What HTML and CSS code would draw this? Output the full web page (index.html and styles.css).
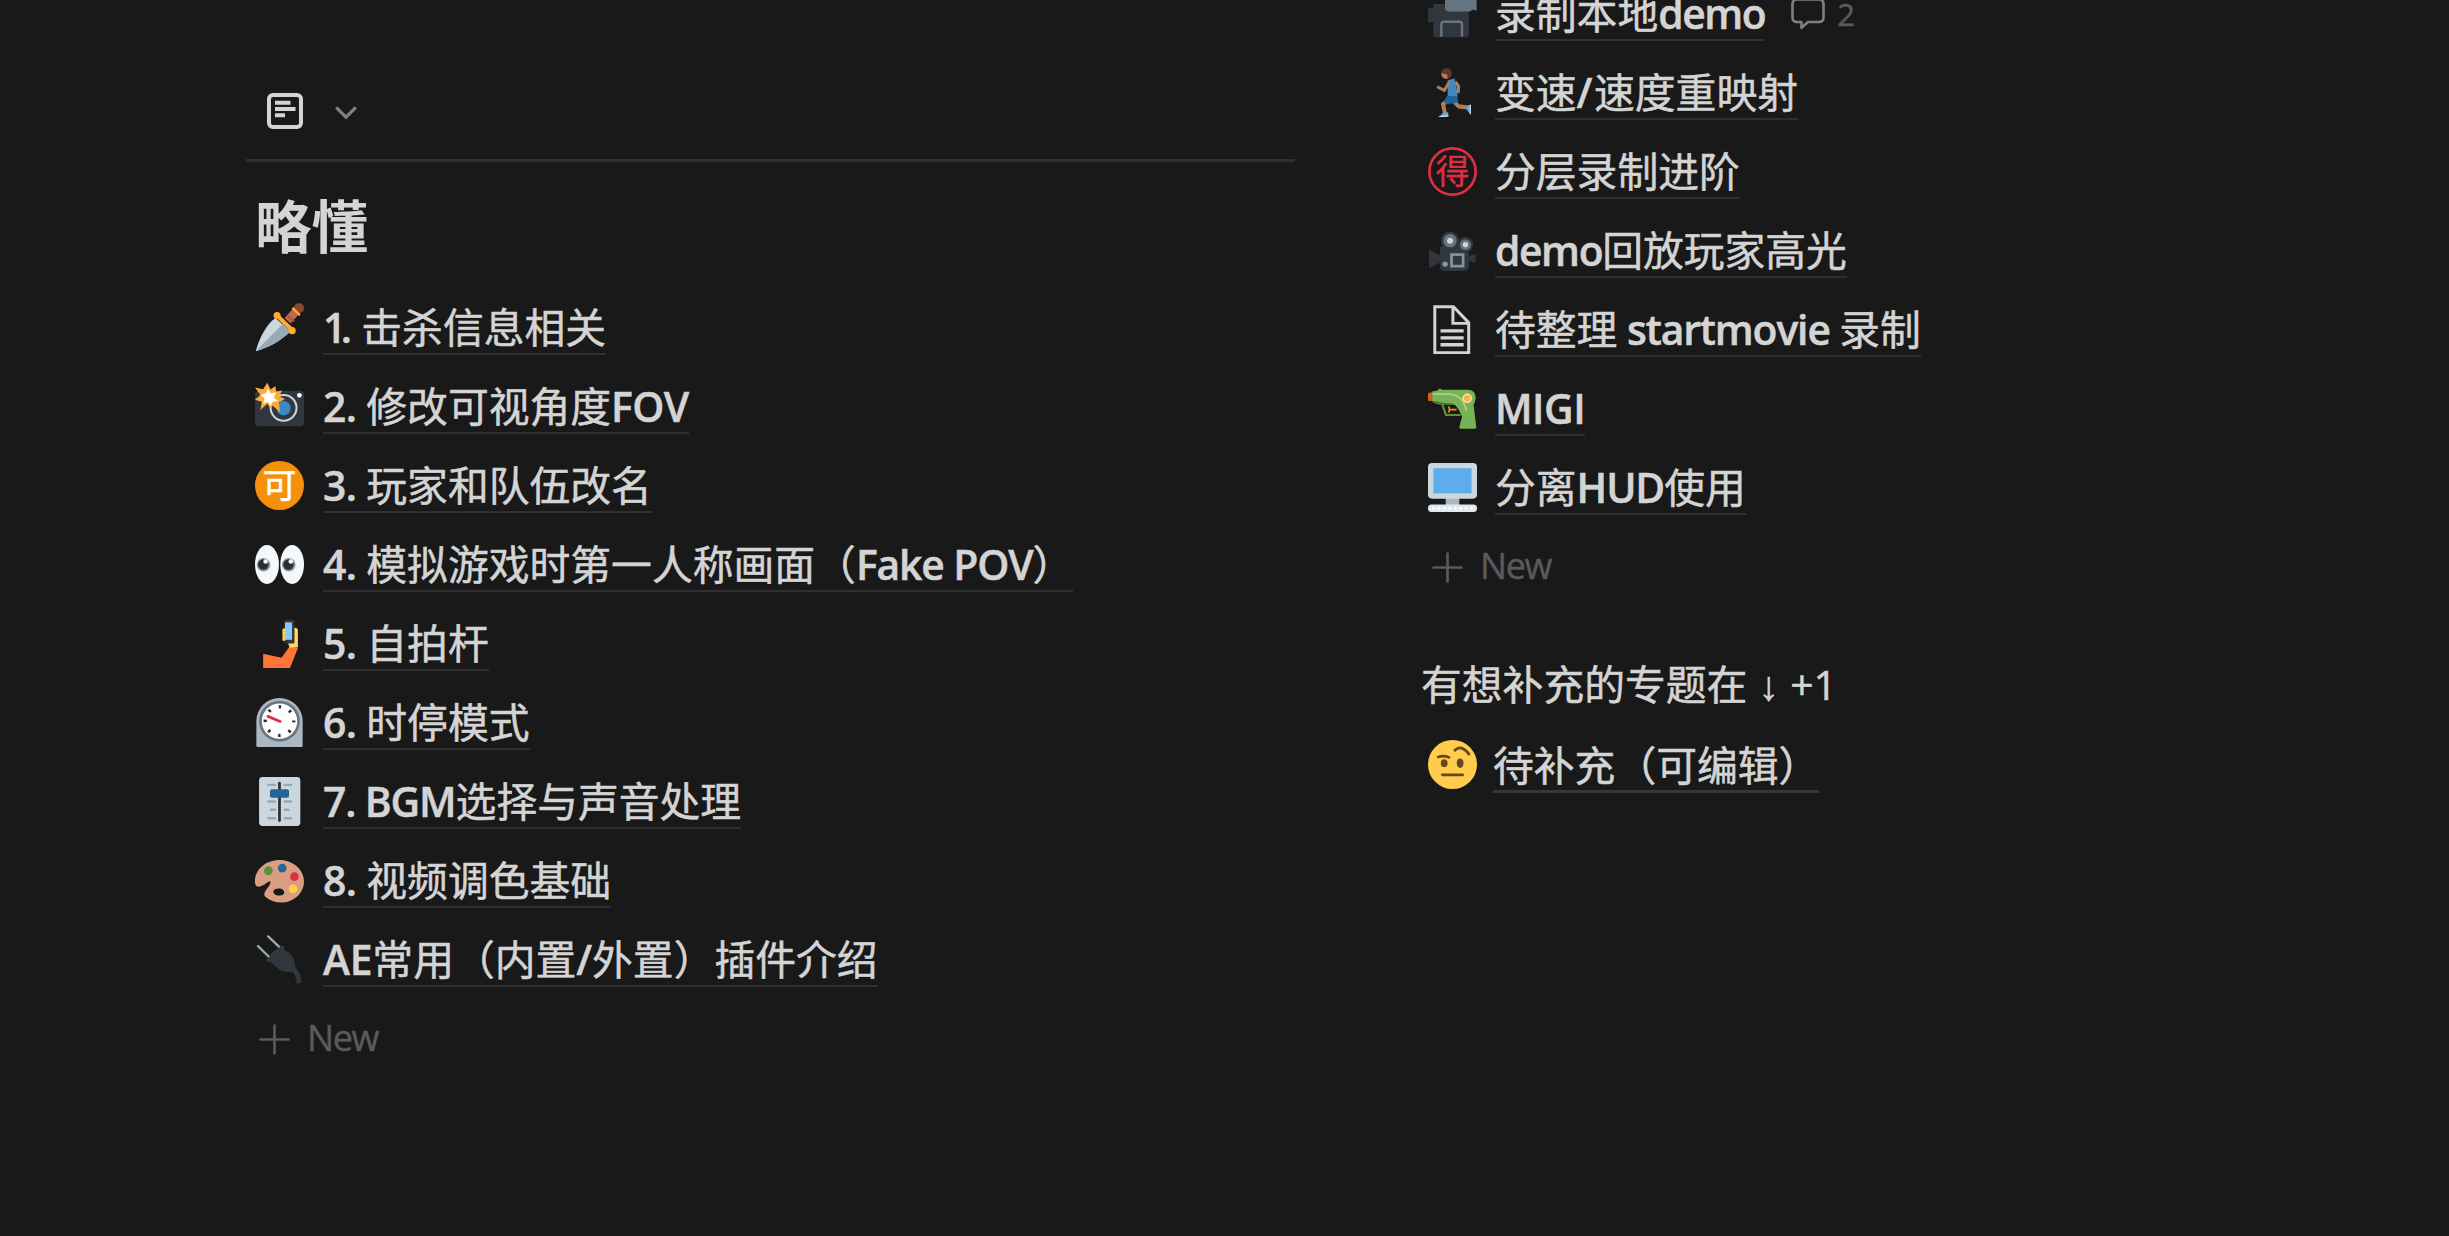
FILE: index.html
```html
<!DOCTYPE html>
<html lang="zh-CN">
<head>
<meta charset="utf-8">
<title>略懂</title>
<link rel="stylesheet" href="styles.css">
</head>
<body>
<main class="page">
  <section class="column column-left">
    <header class="view-bar">
      <svg class="view-icon" viewBox="0 0 36 36"><rect x="2" y="2" width="32" height="32" rx="4" fill="none" stroke="#d4d4d4" stroke-width="4"/><path d="M8 9.7h15.500M8 16h20.500M8 22.300h10" stroke="#d4d4d4" stroke-width="4"/></svg>
      <svg class="chevron" viewBox="0 0 22 14"><path d="M1.200 1.400L11 11.200l9.800-9.800" fill="none" stroke="#7f7f7f" stroke-width="3.300"/></svg>
    </header>
    <h1 class="heading">略懂</h1>
    <ul class="list">
      <li class="row">
        <svg class="icon" viewBox="0 0 36 36"><path d="M0.500 35.500C3 26 8 16 15 11l11 10C20 27 10 33 0.500 35.500z" fill="#ccd6dd"/><path d="M0.500 35.500L20.500 15.500 26 21C20 27 10 33 0.500 35.500z" fill="#9aaab4"/><path d="M24 13l7.500-8.500" stroke="#bf6952" stroke-width="6"/><path d="M24 9.500l5 4" stroke="#a0523e" stroke-width="1.200"/><circle cx="32.300" cy="3.800" r="3.700" fill="#8a4633"/><path d="M27.500 3.500l5.500 5.500" stroke="#ffac33" stroke-width="1.700"/><path d="M16.500 9.500l11 10.500" stroke="#ffac33" stroke-width="3"/><circle cx="16.200" cy="9.200" r="2.600" fill="#ffac33"/><circle cx="27.300" cy="20.300" r="2.600" fill="#ffac33"/></svg>
        <a class="title"><b class="one">1</b><b class="n">. </b>击杀信息相关</a>
      </li>
      <li class="row">
        <svg class="icon" viewBox="0 0 36 36"><rect y="6.500" width="36" height="26" rx="3" fill="#31373d"/><circle cx="21" cy="19" r="9.500" fill="#31373d" stroke="#ccd6dd" stroke-width="1.500"/><circle cx="21" cy="19.300" r="5.300" fill="#3b88c3"/><circle cx="32.600" cy="9.800" r="1.700" fill="#fff"/><path d="M9 .5l2.500 5 3.500-2.500.500 4 4.500-.700-2.500 4.200 4.500 2-4.500 2.500 1 7-5.500-4.500-2 1.500-2-3-5 4.500 1-6L0 13l4-3.500L0 4l6 1.300z" fill="#ffac33"/><path d="M9.500 4.500l2 4 4-1-1.700 4 3.200 2.500-4 .5-1.500 3-2-3-3.500 1.500 1-4L4 9.500 8 8.300z" fill="#fff"/></svg>
        <a class="title"><b class="n">2. </b>修改可视角度<b class="n">FOV</b></a>
      </li>
      <li class="row">
        <svg class="icon" viewBox="0 0 36 36"><circle cx="18" cy="18" r="18" fill="#f4900c"/><text class="glyph glyph-ok" x="18" y="27">可</text></svg>
        <a class="title"><b class="n">3. </b>玩家和队伍改名</a>
      </li>
      <li class="row">
        <svg class="icon" viewBox="0 0 36 36"><ellipse cx="8.800" cy="18" rx="8.800" ry="14.300" fill="#f5f8fa"/><ellipse cx="27.300" cy="18" rx="8.700" ry="14.300" fill="#f5f8fa"/><circle cx="6.300" cy="18.200" r="5" fill="#8899a6"/><circle cx="24.800" cy="18.200" r="5" fill="#8899a6"/><circle cx="6.100" cy="18" r="3.800" fill="#292f33"/><circle cx="24.600" cy="18" r="3.800" fill="#292f33"/><circle cx="7.800" cy="15.800" r="1.700" fill="#f5f8fa"/><circle cx="26.300" cy="15.800" r="1.700" fill="#f5f8fa"/></svg>
        <a class="title"><b class="n">4. </b>模拟游戏时第一人称画面（<b class="t">Fake POV</b>）</a>
      </li>
      <li class="row">
        <svg class="icon" viewBox="0 0 36 36"><path d="M6 25.500l13.500 3 6-8.500 6 1.500L25.700 36H6z" fill="#ff7538"/><path d="M28.500 6.500q3-.5 3 2V21h-6l-1.200-3 4.200-2z" fill="#ffdc5d"/><rect x="21.700" y=".5" width="7.300" height="17.500" rx="1" fill="#31373d"/><rect x="22" y="2.500" width="5.200" height="12.800" fill="#88c9f9"/><path d="M20.200 7h2v9h-2z" fill="#ffdc5d"/><path d="M20 9.200h2M20 11.500h2M20 13.700h2" stroke="#ef9645" stroke-width=".5"/></svg>
        <a class="title"><b class="n">5. </b>自拍杆</a>
      </li>
      <li class="row">
        <svg class="icon" viewBox="0 0 36 36"><path d="M1 35V17a17 17 0 0134 0v18q0 1-1 1H2q-1 0-1-1z" fill="#aab8c2"/><circle cx="18" cy="17" r="15" fill="#66757f"/><circle cx="18" cy="17" r="13" fill="#fff"/><circle cx="18" cy="17" r="10.500" fill="none" stroke="#292f33" stroke-width="2.400" stroke-dasharray="1.800 6.447" stroke-dashoffset=".9"/><path d="M9.500 13.500l9 3.700" stroke="#dd2e44" stroke-width="2" stroke-linecap="round"/></svg>
        <a class="title"><b class="n">6. </b>时停模式</a>
      </li>
      <li class="row">
        <svg class="icon" viewBox="0 0 36 36"><rect x="3" width="30.300" height="36" rx="2.500" fill="#ccd6dd"/><path d="M9.700 5.800h4.800M21.800 5.800h4.800M9.700 18h4.800M21.800 18h4.800M11.700 24h2.800M21.800 24h2.800M9.700 30.300h4.800M21.800 30.300h4.800" stroke="#9aaab4" stroke-width="1.800" stroke-linecap="round"/><path d="M18 4.500v27.500" stroke="#292f33" stroke-width="2" stroke-linecap="round"/><rect x="11" y="9" width="14" height="6.200" rx="1.500" fill="#269"/></svg>
        <a class="title"><b class="t">7. BGM</b>选择与声音处理</a>
      </li>
      <li class="row">
        <svg class="icon" viewBox="0 0 36 36"><path fill-rule="evenodd" d="M18 3C8 3 0 10 0 18.500c0 2 .5 4 2.500 4 3 0 6-3 8.500-4.200 1 2-1 4-2.500 6.200-1.500 2.200-2.800 4.300 0 6.200 3 2.200 6.500 3.500 10.500 3.500 9.500 0 17-7 17-15.500S28 3 18 3zm-.5 20.800c2.300 0 4 1.300 4 2.900s-1.700 2.500-3.800 2.400c-2.200-.1-4.200-1.500-4.200-2.900 0-1.500 1.700-2.400 4-2.400z" fill="#d99e82"/><circle cx="9.800" cy="10.900" r="3.300" fill="#5c913b"/><circle cx="20" cy="8.900" r="3.200" fill="#269"/><circle cx="29" cy="15.200" r="3.200" fill="#dd2e44"/><circle cx="28" cy="24.200" r="3.200" fill="#ffcc4d"/></svg>
        <a class="title"><b class="n">8. </b>视频调色基础</a>
      </li>
      <li class="row">
        <svg class="icon" viewBox="0 0 36 36"><path d="M2.200 8.200l9 8.700M9.700 1l9 8.700" stroke="#99aab5" stroke-width="1.700" stroke-linecap="round"/><path d="M8.500 19.500c-.5-1 0-2 1-2.200L11 15.500c1-2.500 3-4.500 6-5.500l2-2c1-1 2.500 0 2.500 1.500v1.500c4 1.500 6.500 5 7.500 9 .5 3 1 4.500.5 6l-2 1.500c-4 0-8-.5-11-3-2-1.700-3-3-4.500-4.500z" fill="#31373d"/><path d="M27 24.500c4 1.500 5 6 5.500 11" fill="none" stroke="#31373d" stroke-width="3.800"/></svg>
        <a class="title"><b class="a">AE</b>常用（内置<b class="a">/</b>外置）插件介绍</a>
      </li>
    </ul>
    <div class="new-row">
      <svg class="plus" viewBox="0 0 31 31"><path d="M15.500 1.500v28M1.500 15.500h28" stroke="#5a5a5a" stroke-width="2.700" stroke-linecap="round"/></svg>
      <span>New</span>
    </div>
  </section>

  <section class="column column-right">
    <ul class="list">
      <li class="row">
        <svg class="icon" viewBox="0 0 36 36"><path d="M0 14.500l4-1V12q0-1 1-1h23l2 4v18q0 2.500-2.500 2.500h-21Q4 35.500 4 33v-9l-4 .5z" fill="#31373d"/><path d="M12.500 4h23.200v12l-3-.8-1.700 1.300H15q-2.500 0-2.500-2.500z" fill="#66757f"/><path d="M9.800 35V26q0-2 2-2H23q2 0 2 2v9" fill="none" stroke="#66757f" stroke-width="1.800"/></svg>
        <a class="title">录制本地<b class="d">demo</b></a>
        <span class="comments">
          <svg class="bubble" viewBox="0 0 34 32"><path d="M6 1.500h22q4.500 0 4.500 4.500v13.500q0 4.500-4.500 4.500H17l-6.500 5.800V24H6q-4.500 0-4.500-4.500V6Q1.500 1.500 6 1.500z" fill="none" stroke="#7f7f7f" stroke-width="2.600" stroke-linejoin="round"/></svg>
          <span>2</span>
        </span>
      </li>
      <li class="row">
        <svg class="icon" viewBox="0 0 36 36"><g fill="none" stroke="#af7e57" stroke-width="2.300" stroke-linejoin="round"><path d="M20 10l2.500 3.500-.4 5"/><path d="M19.500 25l3 3.200 6.500.8" stroke-width="3"/><path d="M16 23.500l-5 3 1.500 7" stroke-width="3"/></g><circle cx="13.300" cy="4.500" r="3.500" fill="#af7e57"/><path d="M9.800 3.800C10 1 12.500 0 14.500.3 17.500.7 18 3.500 17 6l-2.500 2-.5-3.500z" fill="#60352a"/><path d="M14.500 9l5-1.200c1 4 2 8 2.200 14h-7.500C15 17 14 13 14.500 9z" fill="#4289c1"/><path d="M14 20.500h7.500l.5 5-8.500 1-2-2z" fill="#269"/><path d="M15.500 10.500l-3.500 6-5.300-2.700" fill="none" stroke="#af7e57" stroke-width="2.200" stroke-linejoin="round"/><path d="M11 33l3.800-.5.200 2.700-7.200.8z" fill="#55acee"/><path d="M28.500 27.500l2.700-.5-.2 7-3-4z" fill="#55acee"/><path d="M7.800 36l7.200-.8M31.100 27v7" stroke="#e1e8ed" stroke-width=".8"/></svg>
        <a class="title">变速<b class="s">/</b>速度重映射</a>
      </li>
      <li class="row">
        <svg class="icon" viewBox="0 0 36 36"><circle cx="18" cy="18" r="17" fill="none" stroke="#dd2e44" stroke-width="2"/><text class="glyph glyph-get" x="18" y="27">得</text></svg>
        <a class="title">分层录制进阶</a>
      </li>
      <li class="row">
        <svg class="icon" viewBox="0 0 36 36"><path d="M.8 17.500l8 4V17q0-2.500 2.500-2.500H28q2 0 2 2V22l5-1.500V27l-5-1.500V30q0 3-3 3H12q-3 0-3.300-3v-3l-7.900 4z" fill="#31373d"/><circle cx="16.200" cy="10.800" r="6.700" fill="#31373d"/><circle cx="27.500" cy="13.700" r="5.700" fill="#31373d"/><circle cx="16.200" cy="10.800" r="4.900" fill="#66757f"/><circle cx="27.500" cy="13.700" r="4" fill="#66757f"/><circle cx="16.200" cy="10.800" r="2.200" fill="#ccd6dd"/><circle cx="27.500" cy="13.700" r="1.900" fill="#ccd6dd"/><rect x="17.300" y="21" width="8.500" height="8.500" fill="none" stroke="#8094a2" stroke-width="2"/><circle cx="12.600" cy="28" r="2" fill="#8899a6"/></svg>
        <a class="title"><b class="d">demo</b>回放玩家高光</a>
      </li>
      <li class="row">
        <svg class="icon" viewBox="0 0 36 36"><path d="M5 1.200h13.700L29.900 13v22H5zM18.300 1.200V13.500h11.600" fill="none" stroke="#d4d4d4" stroke-width="2.200"/><path d="M9.200 19h17M9.200 24.200h17M9.200 29.200h17" stroke="#d4d4d4" stroke-width="2.400"/></svg>
        <a class="title">待整理<b class="t"> startmovie </b>录制</a>
      </li>
      <li class="row">
        <svg class="icon" viewBox="0 0 36 36"><path d="M0 7.500q0-1 1-1l2-.5v6.500H1q-1 0-1-1z" fill="#e8561f"/><path d="M10.500 15l2.700 7.800H24" fill="none" stroke="#5c913b" stroke-width="1.600"/><path d="M15 16.500q1.500 2 0 4.500M15.500 18.800H21" fill="none" stroke="#f4900c" stroke-width="1.200"/><path d="M3 5.500l4-.7 1.500-1.500 2 1H29q6 0 6 6-.3 3-1.500 5l2 16.500q0 1-1 1H24q-1.200 0-1-1l2-8q-2-5-5-8.300L10 15q-5 0-7-2.500z" fill="#77b255"/><path d="M4 7.500h12q10 1 12 12" fill="none" stroke="#a6d388" stroke-width="1.300" stroke-linecap="round"/><path d="M4 13l7 1.300 8 .7" fill="none" stroke="#3e721d" stroke-width="1"/><circle cx="28.800" cy="10.500" r="3.500" fill="#ffe8b6"/><circle cx="28.800" cy="10.500" r="2.500" fill="#ffb636"/></svg>
        <a class="title"><b class="m">MIGI</b></a>
      </li>
      <li class="row">
        <svg class="icon" viewBox="0 0 36 36"><path d="M13 25h10v7H13z" fill="#aab8c2"/><rect width="36" height="26.200" rx="3" fill="#ccd6dd"/><rect x="4" y="3.800" width="28" height="18.500" fill="#5dadec"/><rect y="30.400" width="36" height="5.600" rx="2.600" fill="#e1e8ed"/><path d="M3 33.200h31" stroke="#fff" stroke-width="1.800" stroke-dasharray="2 2"/></svg>
        <a class="title">分离<b class="t">HUD</b>使用</a>
      </li>
    </ul>
    <div class="new-row">
      <svg class="plus" viewBox="0 0 31 31"><path d="M15.500 1.500v28M1.500 15.500h28" stroke="#5a5a5a" stroke-width="2.700" stroke-linecap="round"/></svg>
      <span>New</span>
    </div>
    <p class="note">有想补充的专题在 <span class="arrow">↓</span> +1</p>
    <div class="row row-link">
      <svg class="icon" viewBox="0 0 36 36"><circle cx="18" cy="18" r="18" fill="#ffcc4d"/><g fill="none" stroke="#65471b" stroke-width="1.900" stroke-linecap="round"><path d="M7.500 12.500q4-1.500 8 .3M10.500 25.600h15"/><path d="M19.800 7.500q4.500-4.500 10.300 2.800" stroke-width="2.100"/></g><ellipse cx="11.900" cy="17" rx="2.500" ry="2.900" fill="#65471b"/><ellipse cx="23.600" cy="17" rx="2.500" ry="3.500" fill="#65471b"/></svg>
      <a class="title">待补充（可编辑）</a>
    </div>
  </section>
</main>
</body>
</html>
```

FILE: styles.css
```css
* { box-sizing: border-box; }

body {
  margin: 0;
  background: #191919;
  color: #d4d4d4;
  font-family: "Noto Sans CJK SC", sans-serif;
  font-size: 40.8px;
}

.page {
  display: grid;
  grid-template-columns: 1049px 1fr;
  column-gap: 124px;
  height: 1236px;
  padding-left: 246px;
  overflow: hidden;
}

.column-right { margin-top: -26px; }

.view-bar {
  display: flex;
  align-items: center;
  gap: 32px;
  height: 162px;
  padding: 62px 0 0 21px;
  border-bottom: 3px solid #2f2f2f;
}
.view-icon { width: 36px; height: 36px; }
.chevron { width: 22px; height: 14px; margin-top: 4px; }

.heading {
  height: 126px;
  margin: 0;
  padding: 20px 0 0 9px;
  font-size: 56.5px;
  font-weight: 700;
  line-height: 82px;
}

.list { margin: 0; padding: 0; list-style: none; }

.row {
  display: flex;
  align-items: center;
  height: 79px;
  padding-left: 9px;
}
.icon { flex: none; width: 49px; height: 49px; margin-right: 19px; }
.column-right .icon { margin-right: 18px; }

.title {
  height: 55px;
  border-bottom: 2px solid #2f2f2f;
  line-height: 52px;
  white-space: pre;
  -webkit-text-stroke: 0.5px #d4d4d4;
}
.title b {
  font-family: "Open Sans", sans-serif;
  font-weight: 600;
}
.one { letter-spacing: -5.6px; }
.n { letter-spacing: -0.6px; }
.t { letter-spacing: -1.1px; }
.d { letter-spacing: -1.4px; }
.m { letter-spacing: -0.5px; }
.a { letter-spacing: -0.2px; }
.s { letter-spacing: 1.5px; }

.glyph {
  font-family: "Noto Sans CJK SC", sans-serif;
  text-anchor: middle;
}
.glyph-ok { font-size: 25px; fill: #fff; stroke: #fff; stroke-width: 0.4px; }
.glyph-get { font-size: 25px; fill: #dd2e44; stroke: #dd2e44; stroke-width: 0.2px; }

.comments {
  display: flex;
  align-items: center;
  gap: 12px;
  margin-left: 26px;
  color: #5a5a5a;
  font: 31px/40px "Open Sans", sans-serif;
  -webkit-text-stroke: 0.5px #5a5a5a;
}
.bubble { width: 34px; height: 32px; }

.new-row {
  display: flex;
  align-items: center;
  gap: 17px;
  height: 80px;
  padding-left: 13px;
  color: #5a5a5a;
  font: 36px/50px "Open Sans", sans-serif;
  letter-spacing: -1.4px;
  -webkit-text-stroke: 0.4px #5a5a5a;
}
.new-row span { margin-top: -2px; }
.plus { width: 31px; height: 31px; }

.note {
  height: 118px;
  margin: 0;
  padding: 50px 0 0 2px;
  font-family: "Open Sans", "Noto Sans CJK SC", sans-serif;
  line-height: 54px;
  word-spacing: 0.6px;
  -webkit-text-stroke: 0.5px #d4d4d4;
}
.arrow { font-family: "Liberation Sans", sans-serif; }

.column-right .row-link .icon { margin-right: 16px; }
.row-link .title {
  height: 57px;
  border-bottom: 3px solid #373737;
  line-height: 55px;
}
```
